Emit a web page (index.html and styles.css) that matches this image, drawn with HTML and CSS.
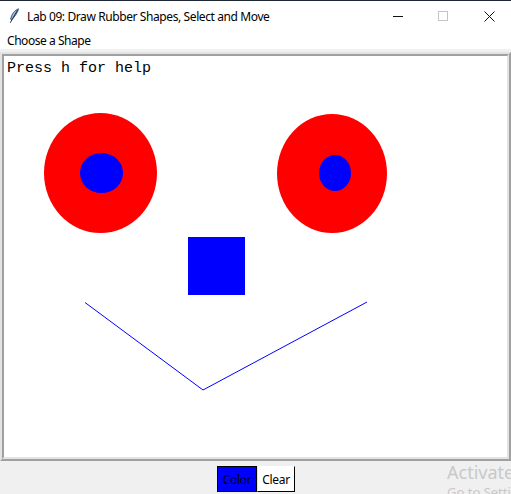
FILE: index.html
```html
<!DOCTYPE html>
<html>
<head>
<meta charset="utf-8">
<link rel="stylesheet" href="styles.css">
</head>
<body>
<div class="window">
  <div class="titlebar">
    <svg class="app-icon" width="12" height="16" viewBox="0 0 12 16">
      <path d="M10.5 0.8 C7 2 3.5 6 2.6 11.2 L4.2 11.4 C6.5 8.5 9.8 5 10.5 0.8 Z" fill="#9fb8d8" stroke="#2c4f7c" stroke-width="0.9"/>
      <path d="M9.6 2 L2.2 14.8" stroke="#1c2f4f" stroke-width="1"/>
    </svg>
    <span class="title">Lab 09: Draw Rubber Shapes, Select and Move</span>
    <div class="controls">
      <span class="ctl ctl-min"></span>
      <span class="ctl ctl-max"></span>
      <svg class="ctl-close" width="11" height="11" viewBox="0 0 11 11"><path d="M0.5 0.5 L10.5 10.5 M10.5 0.5 L0.5 10.5" stroke="#111" stroke-width="1"/></svg>
    </div>
  </div>
  <div class="menubar"><span class="menu-item">Choose a Shape</span></div>
  <div class="main">
    <div class="frame-outer">
      <div class="frame-inner">
        <svg class="canvas" width="503" height="402" viewBox="0 0 503 402">
          <text x="3" y="16" class="help">Press h for help</text>
          <ellipse cx="96.5" cy="117" rx="56.5" ry="60" fill="#ff0000"/>
          <ellipse cx="97.5" cy="117" rx="21.5" ry="20" fill="#0000ff"/>
          <ellipse cx="328" cy="117.5" rx="55" ry="59.5" fill="#ff0000"/>
          <ellipse cx="331" cy="117" rx="16" ry="18" fill="#0000ff"/>
          <rect x="184" y="181" width="57" height="58" fill="#0000ff"/>
          <polyline points="81,246.5 199,334 363,246" fill="none" stroke="#0000ff" stroke-width="1"/>
        </svg>
      </div>
    </div>
    <div class="footer">
      <button class="btn btn-color">Color</button><button class="btn btn-clear">Clear</button>
    </div>
    <div class="watermark">
      <div class="wm-big">Activate Windows</div>
      <div class="wm-small">Go to Settings to activate Windows.</div>
    </div>
  </div>
</div>
</body>
</html>
```
FILE: styles.css
```css
html, body {
  margin: 0;
  padding: 0;
  background: #f0f0f0;
}
.window {
  width: 511px;
  height: 494px;
  overflow: hidden;
  position: relative;
  font-family: "Noto Sans", "Liberation Sans", sans-serif;
}
.titlebar {
  height: 29px;
  border-top: 1px solid #1e2636;
  background: #ffffff;
  display: flex;
  align-items: center;
  position: relative;
}
.app-icon {
  margin-left: 8px;
  margin-top: 1px;
}
.title {
  margin-left: 7px;
  font-size: 12px;
  color: #000;
  letter-spacing: -0.4px;
  margin-top: 1px;
}
.controls {
  margin-left: auto;
  display: flex;
  align-items: center;
  height: 100%;
}
.ctl-min {
  width: 10px;
  height: 1px;
  background: #111;
  margin-right: 35px;
  margin-top: 1px;
}
.ctl-max {
  width: 8px;
  height: 8px;
  border: 1px solid #c4c4c4;
  margin-right: 36px;
  margin-top: 1px;
}
.ctl-close {
  margin-right: 16px;
  margin-top: 1px;
}
.ctl { display: block; }
.menubar {
  height: 19px;
  background: #ffffff;
  display: flex;
  align-items: center;
}
.menu-item {
  margin-left: 7px;
  font-size: 12px;
  letter-spacing: -0.45px;
  margin-top: 1px;
}
.main {
  background: #f0f0f0;
  padding-top: 3px;
  position: relative;
  height: 444px;
}
.frame-outer {
  border: 2px solid;
  border-color: #e3e3e3 #a0a0a0 #a0a0a0 #e3e3e3;
}
.frame-inner {
  border: 2px solid;
  border-color: #a0a0a0 #e3e3e3 #e3e3e3 #a0a0a0;
  background: #ffffff;
  height: 401px;
}
.canvas {
  display: block;
}
.help {
  font-family: "Liberation Mono", "DejaVu Sans Mono", monospace;
  font-size: 15px;
  fill: #000;
}
.footer {
  display: flex;
  justify-content: center;
  padding-top: 5px;
  padding-left: 1px;
}
.btn {
  font-family: "Noto Sans", "Liberation Sans", sans-serif;
  font-size: 12px;
  height: 26px;
  padding: 0;
  margin: 0;
  color: #000;
  letter-spacing: -0.3px;
}
.btn-color {
  width: 40px;
  background: #0000ff;
  border: 1px solid #000;
}
.btn-clear {
  width: 38px;
  background: #ffffff;
  border: 1px solid;
  border-color: #ffffff #000 #000 #e3e3e3;
}
.watermark {
  position: absolute;
  left: 447px;
  top: 411px;
  color: #c8c8c8;
  white-space: nowrap;
}
.wm-big {
  font-size: 18px;
  line-height: 24px;
}
.wm-small {
  font-size: 13px;
  line-height: 16px;
}
```
